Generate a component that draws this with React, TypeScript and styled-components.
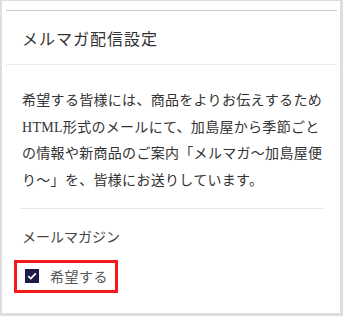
import styled, { createGlobalStyle } from "styled-components";

const GlobalStyle = createGlobalStyle`
  html, body {
    margin: 0;
    padding: 0;
    background: #dedede;
  }
  body {
    font-family: "Liberation Serif", "Noto Sans CJK JP", serif;
    color: #333;
  }
`;

const Frame = styled.div`
  width: 338px;
  height: 312px;
  margin: 1px 3px 3px 2px;
  background: #fff;
  box-sizing: border-box;
  padding: 9px 3px 0 4px;
`;

const Panel = styled.section`
  border-top: 1px solid #c9c9c9;
`;

const Header = styled.header`
  height: 53px;
  display: flex;
  align-items: center;
  padding: 0 16px;
  border-bottom: 1px solid #ececec;
`;

const Title = styled.h2`
  margin: 0;
  font-size: 16px;
  font-weight: 400;
  letter-spacing: 1px;
  color: #333;
`;

const Body = styled.div`
  padding: 23px 14px 0;
`;

const Lead = styled.div`
  padding: 0 2px 13px;
  border-bottom: 1px solid #e6e6e6;
  font-size: 14px;
  line-height: 26.7px;
  letter-spacing: 0.3px;
  color: #333;
`;

const Line = styled.div`
  white-space: nowrap;
`;

const Label = styled.div`
  margin-top: 18px;
  padding-left: 2px;
  font-size: 14px;
  line-height: 21px;
  color: #444;
`;

const Choice = styled.label`
  margin: 12px 0 0 -6px;
  display: inline-flex;
  align-items: center;
  gap: 11px;
  height: 27px;
  padding: 0 7px 0 8px;
  border: 3px solid #f21a1a;
  cursor: pointer;
`;

const Box = styled.span<{ checked?: boolean }>`
  width: 14px;
  height: 14px;
  display: flex;
  align-items: center;
  justify-content: center;
  background: ${(props) => (props.checked ? "#1c1b45" : "#fff")};
  border: 1px solid #1c1b45;
  box-sizing: border-box;
`;

const ChoiceText = styled.span`
  font-size: 14px;
  color: #555;
  letter-spacing: 0.5px;
`;

const lines = [
  "希望する皆様には、商品をよりお伝えするため",
  "HTML形式のメールにて、加島屋から季節ごと",
  "の情報や新商品のご案内「メルマガ〜加島屋便",
  "り〜」を、皆様にお送りしています。",
];

const App = () => {
  return (
    <>
      <GlobalStyle />
      <Frame>
        <Panel>
          <Header>
            <Title>メルマガ配信設定</Title>
          </Header>
          <Body>
            <Lead>
              {lines.map((line) => (
                <Line key={line}>{line}</Line>
              ))}
            </Lead>
            <Label>メールマガジン</Label>
            <Choice>
              <Box checked>
                <svg width="10" height="8" viewBox="0 0 10 8">
                  <path
                    d="M1.2 4.2 L3.8 6.6 L8.8 1.4"
                    fill="none"
                    stroke="#fff"
                    strokeWidth="1.8"
                  />
                </svg>
              </Box>
              <ChoiceText>希望する</ChoiceText>
            </Choice>
          </Body>
        </Panel>
      </Frame>
    </>
  );
};

export default App;
